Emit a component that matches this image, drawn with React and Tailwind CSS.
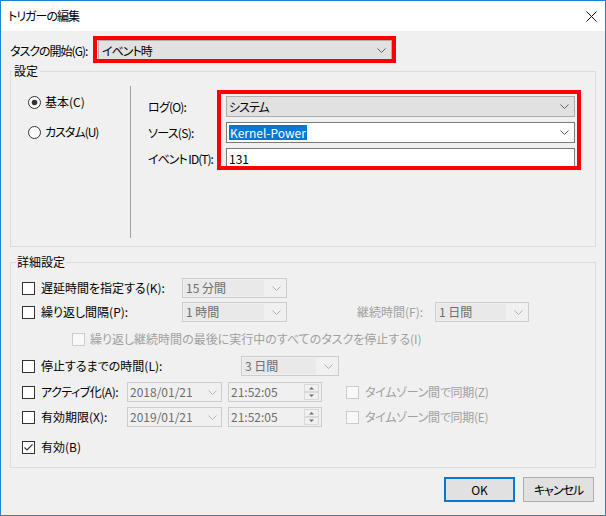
import React from "react";

const Chevron = ({ color = "#606060" }) => (
  <svg width="9" height="5" viewBox="0 0 9 5" className="shrink-0">
    <path d="M0.5 0.5L4.5 4.5L8.5 0.5" fill="none" stroke={color} strokeWidth="1" />
  </svg>
);

function Checkbox({ checked, disabled }) {
  return (
    <span
      className={
        disabled
          ? "w-[13px] h-[13px] shrink-0 border border-[#cccccc] bg-[#f8f8f8] flex items-center justify-center"
          : "w-[13px] h-[13px] shrink-0 border border-[#333333] bg-white flex items-center justify-center"
      }
    >
      {checked && (
        <svg width="11" height="11" viewBox="0 0 11 11">
          <path d="M1.5 5.5L4 8L9.5 2.5" fill="none" stroke="#333333" strokeWidth="1.1" />
        </svg>
      )}
    </span>
  );
}

function Radio({ checked }) {
  return (
    <svg width="13" height="13" viewBox="0 0 13 13" className="shrink-0">
      <circle cx="6.5" cy="6.5" r="6" fill="#ffffff" stroke="#333333" strokeWidth="1" />
      {checked && <circle cx="6.5" cy="6.5" r="2.8" fill="#333333" />}
    </svg>
  );
}

function DisabledCombo({ w, text }) {
  return (
    <div
      className="h-[20px] border border-[#cccccc] bg-[#f0f0f0] flex items-center pl-[1px] pr-[5px] shrink-0"
      style={{ width: w }}
    >
      <span className="flex-1 h-[16px] bg-[#e9e9e9] leading-[16px] pl-[2px] text-[#6d6d6d] mr-[8px]">
        {text}
      </span>
      <Chevron color="#b0b0b0" />
    </div>
  );
}

function DateBox({ text }) {
  return (
    <div className="w-[95px] h-[20px] border border-[#cccccc] flex items-center justify-between pl-[2px] pr-[4px] shrink-0">
      <span className="text-[#6d6d6d] leading-[16px]">{text}</span>
      <Chevron color="#b8b8b8" />
    </div>
  );
}

function TimeBox({ text }) {
  return (
    <div className="ml-[6px] w-[94px] h-[20px] border border-[#cccccc] flex items-center justify-between pl-[2px] pr-[2px] shrink-0">
      <span className="text-[#6d6d6d] leading-[16px]">{text}</span>
      <svg width="15" height="16" viewBox="0 0 15 16">
        <rect x="0.5" y="0.5" width="14" height="7" fill="#f0f0f0" stroke="#d9d9d9" />
        <rect x="0.5" y="8.5" width="14" height="7" fill="#f0f0f0" stroke="#d9d9d9" />
        <path d="M5 5.5L7.5 3L10 5.5Z" fill="#6d6d6d" />
        <path d="M5 10.5L7.5 13L10 10.5Z" fill="#6d6d6d" />
      </svg>
    </div>
  );
}

export default function App() {
  return (
    <div className="w-[606px] h-[516px] border border-[#1883d7] bg-[#f0f0f0] flex flex-col text-[12px] leading-[16px] text-black font-['Noto_Sans_CJK_JP','Noto_Sans',sans-serif] [font-feature-settings:'palt']">
      {/* title bar */}
      <div className="h-[30px] bg-white flex items-center justify-between pl-[7px] pr-[8px] shrink-0">
        <span className="tracking-[-1px]">トリガーの編集</span>
        <svg width="11" height="11" viewBox="0 0 11 11">
          <path d="M0.5 0.5L10.5 10.5M10.5 0.5L0.5 10.5" stroke="#111111" strokeWidth="1" />
        </svg>
      </div>

      {/* body */}
      <div className="flex-1 pl-[9px] pr-[8px] flex flex-col">
        {/* start row */}
        <div className="mt-[9px] flex items-center h-[21px]">
          <span className="w-[88px] shrink-0 tracking-[-1px] whitespace-nowrap">タスクの開始(G):</span>
          <div className="relative w-[294px] h-[21px] border border-[#adadad] bg-[#e1e1e1] flex items-center justify-between pl-[3px] pr-[5px]">
            <span className="tracking-[-1px]">イベント時</span>
            <Chevron />
            <div className="absolute -left-[6px] -top-[5px] -right-[5px] -bottom-[3px] border-4 border-[#ff0000] pointer-events-none" />
          </div>
        </div>

        {/* 設定 group */}
        <fieldset className="mt-[2px] border border-[#dcdcdc] w-[586px]">
          <legend className="ml-[1px] px-[2px] leading-[16px]">設定</legend>
          <div className="flex h-[167px]">
            <div className="w-[119px] shrink-0 pl-[17px] pt-[15px] flex flex-col gap-[14px]">
              <div className="flex items-center h-[16px]">
                <Radio checked />
                <span className="ml-[4px]">基本(C)</span>
              </div>
              <div className="flex items-center h-[16px]">
                <Radio />
                <span className="ml-[4px] tracking-[-1px]">カスタム(U)</span>
              </div>
            </div>
            <div className="w-px bg-[#a0a0a0] mt-[7px] mb-[8px] shrink-0" />
            <div className="pl-[17px] pt-[17px] flex items-start">
              <div className="w-[78px] flex flex-col gap-[5px]">
                <span className="h-[21px] flex items-center tracking-[-0.8px]">ログ(O):</span>
                <span className="h-[21px] flex items-center tracking-[-0.7px]">ソース(S):</span>
                <span className="h-[21px] flex items-center whitespace-nowrap tracking-[-1px]">イベント ID(T):</span>
              </div>
              <div className="relative w-[349px] flex flex-col gap-[5px]">
                <div className="h-[21px] border border-[#adadad] bg-[#e1e1e1] flex items-center justify-between pl-[2px] pr-[5px]">
                  <span className="tracking-[-1px]">システム</span>
                  <Chevron />
                </div>
                <div className="h-[21px] border border-[#7a7a7a] bg-white flex items-center justify-between pl-[2px] pr-[5px]">
                  <span className="bg-[#0078d7] text-white px-[1px] leading-[15px]">Kernel-Power</span>
                  <Chevron />
                </div>
                <div className="h-[21px] border border-[#7a7a7a] bg-white flex items-center pl-[2px]">
                  <span>131</span>
                </div>
                <div className="absolute -left-[9px] -top-[6px] -right-[6px] -bottom-[1px] border-4 border-[#ff0000] pointer-events-none" />
              </div>
            </div>
          </div>
        </fieldset>

        {/* 詳細設定 group */}
        <fieldset className="mt-[7px] border border-[#dcdcdc] w-[586px] pb-[9px]">
          <legend className="ml-[5px] px-[1px] leading-[16px]">詳細設定</legend>
          <div className="flex flex-col">
            <div className="mt-[7px] h-[22px] flex items-center pl-[11px]">
              <Checkbox />
              <span className="ml-[6px] w-[141px] shrink-0">遅延時間を指定する(K):</span>
              <DisabledCombo w={105} text="15 分間" />
            </div>
            <div className="mt-[2px] h-[22px] flex items-center pl-[11px]">
              <Checkbox />
              <span className="ml-[6px] w-[141px] shrink-0">繰り返し間隔(P):</span>
              <DisabledCombo w={105} text="1 時間" />
              <span className="ml-[70px] w-[78px] shrink-0 text-[#a0a0a0]">継続時間(F):</span>
              <DisabledCombo w={94} text="1 日間" />
            </div>
            <div className="mt-[5px] h-[22px] flex items-center pl-[61px]">
              <Checkbox disabled />
              <span className="ml-[5px] text-[#a0a0a0] whitespace-nowrap">
                繰り返し継続時間の最後に実行中のすべてのタスクを停止する(I)
              </span>
            </div>
            <div className="mt-[5px] h-[22px] flex items-center pl-[11px]">
              <Checkbox />
              <span className="ml-[6px] w-[200px] shrink-0">停止するまでの時間(L):</span>
              <DisabledCombo w={98} text="3 日間" />
            </div>
            <div className="mt-[4px] h-[22px] flex items-center pl-[11px]">
              <Checkbox />
              <span className="ml-[6px] w-[86px] shrink-0 tracking-[-0.5px] whitespace-nowrap">アクティブ化(A):</span>
              <DateBox text="2018/01/21" />
              <TimeBox text="21:52:05" />
              <span className="ml-[24px]">
                <Checkbox disabled />
              </span>
              <span className="ml-[6px] text-[#a0a0a0] tracking-[-0.3px]">タイムゾーン間で同期(Z)</span>
            </div>
            <div className="mt-[3px] h-[22px] flex items-center pl-[11px]">
              <Checkbox />
              <span className="ml-[6px] w-[86px] shrink-0">有効期限(X):</span>
              <DateBox text="2019/01/21" />
              <TimeBox text="21:52:05" />
              <span className="ml-[24px]">
                <Checkbox disabled />
              </span>
              <span className="ml-[6px] text-[#a0a0a0] tracking-[-0.3px]">タイムゾーン間で同期(E)</span>
            </div>
            <div className="mt-[8px] h-[22px] flex items-center pl-[11px]">
              <Checkbox checked />
              <span className="ml-[6px]">有効(B)</span>
            </div>
          </div>
        </fieldset>

        {/* buttons */}
        <div className="mt-[9px] flex justify-end gap-[8px] pr-[3px]">
          <button className="w-[71px] h-[25px] border-2 border-[#0078d7] bg-[#e1e1e1] flex items-center justify-center">
            OK
          </button>
          <button className="w-[71px] h-[25px] border border-[#adadad] bg-[#e1e1e1] flex items-center justify-center tracking-[-1px]">
            キャンセル
          </button>
        </div>
      </div>
    </div>
  );
}
